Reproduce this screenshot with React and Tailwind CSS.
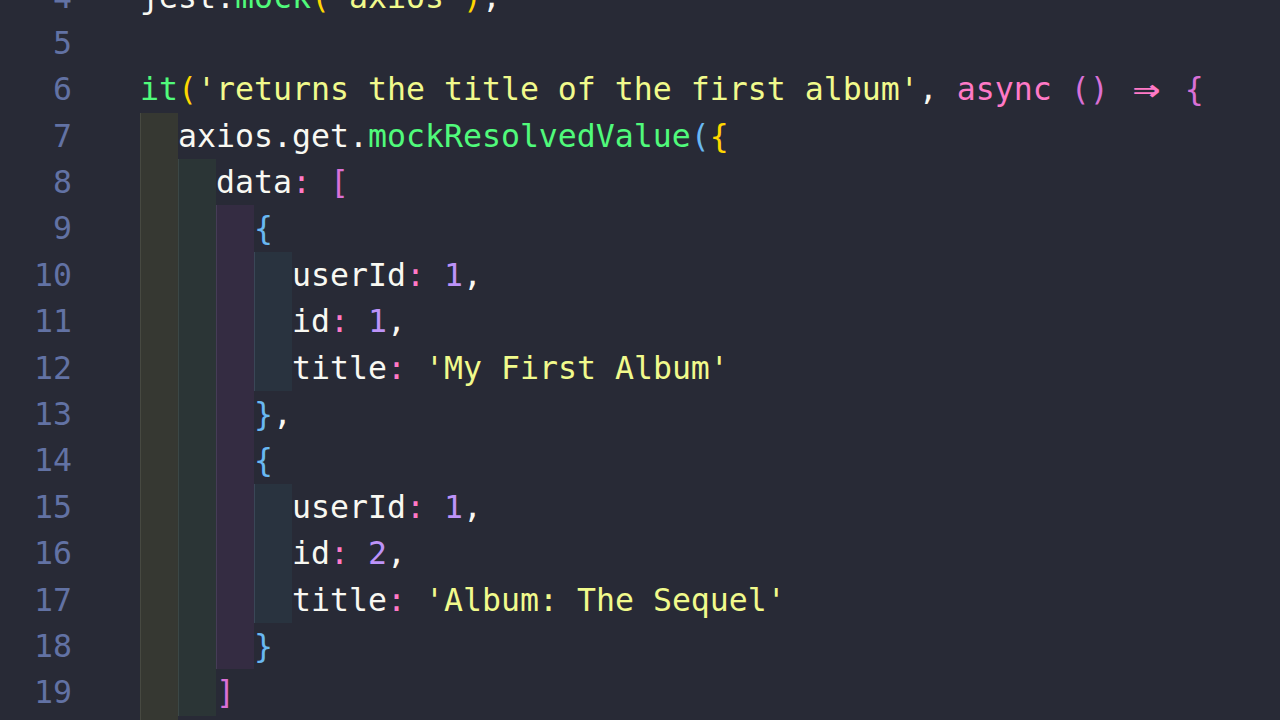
const W = "text-[#f8f8f2]"
const G = "text-[#50fa7b]"
const Y = "text-[#f1fa8c]"
const P = "text-[#ff79c6]"
const V = "text-[#bd93f9]"
const GO = "text-[#ffd700]"
const OR = "text-[#da70d6]"
const BL = "text-[#69b8f2]"

// indent guide colours, one per depth
const guides = [
  "bg-[#363832] border-l border-[#474941]",
  "bg-[#2b3536] border-l border-[#3b4746]",
  "bg-[#342c42] border-l border-[#463c57]",
  "bg-[#29333f] border-l border-[#3a4757]",
]

const lines = [
  { n: 4, depth: 0, tokens: [["jest.", W], ["mock", G], ["(", GO], ["'axios'", Y], [")", GO], [";", W]] },
  { n: 5, depth: 0, tokens: [] },
  {
    n: 6, depth: 0, tokens: [
      ["it", G], ["(", GO], ["'returns the title of the first album'", Y], [", ", W],
      ["async", P], [" ", W], ["()", OR], [" ", W], ["arrow", P], [" ", W], ["{", OR],
    ]
  },
  { n: 7, depth: 1, tokens: [["axios.get.", W], ["mockResolvedValue", G], ["(", BL], ["{", GO]] },
  { n: 8, depth: 2, tokens: [["data", W], [": ", P], ["[", OR]] },
  { n: 9, depth: 3, tokens: [["{", BL]] },
  { n: 10, depth: 4, tokens: [["userId", W], [": ", P], ["1", V], [",", W]] },
  { n: 11, depth: 4, tokens: [["id", W], [": ", P], ["1", V], [",", W]] },
  { n: 12, depth: 4, tokens: [["title", W], [": ", P], ["'My First Album'", Y]] },
  { n: 13, depth: 3, tokens: [["}", BL], [",", W]] },
  { n: 14, depth: 3, tokens: [["{", BL]] },
  { n: 15, depth: 4, tokens: [["userId", W], [": ", P], ["1", V], [",", W]] },
  { n: 16, depth: 4, tokens: [["id", W], [": ", P], ["2", V], [",", W]] },
  { n: 17, depth: 4, tokens: [["title", W], [": ", P], ["'Album: The Sequel'", Y]] },
  { n: 18, depth: 3, tokens: [["}", BL]] },
  { n: 19, depth: 2, tokens: [["]", OR]] },
  { n: 20, depth: 1, tokens: [["}", GO], [")", BL], [";", W]] },
]

function Token({ text, color }) {
  if (text === "arrow") {
    return (
      <span className={`inline-block w-[38px] text-center ${color}`}>
        <span className="inline-block -translate-y-[1px] scale-x-[1.45] scale-y-[1.15] font-bold">⇒</span>
      </span>
    )
  }
  return <span className={color}>{text}</span>
}

export default function App() {
  return (
    <div className="h-[720px] w-[1280px] overflow-hidden bg-[#282a36] font-['DejaVu_Sans_Mono',monospace] text-[31.56px] leading-[46.4px]">
      <div className="-mt-[26.5px] flex flex-col">
        {lines.map(line => (
          <div key={line.n} className="flex h-[46.4px] items-stretch whitespace-pre">
            <div className="w-[72px] shrink-0 text-right text-[#6272a4]">{line.n}</div>
            <div className="w-[68px] shrink-0" />
            {guides.slice(0, line.depth).map((g, i) => (
              <div key={i} className={`w-[38px] shrink-0 ${g}`} />
            ))}
            <div className="flex">
              {line.tokens.map(([text, color], i) => (
                <Token key={i} text={text} color={color} />
              ))}
            </div>
          </div>
        ))}
      </div>
    </div>
  )
}
